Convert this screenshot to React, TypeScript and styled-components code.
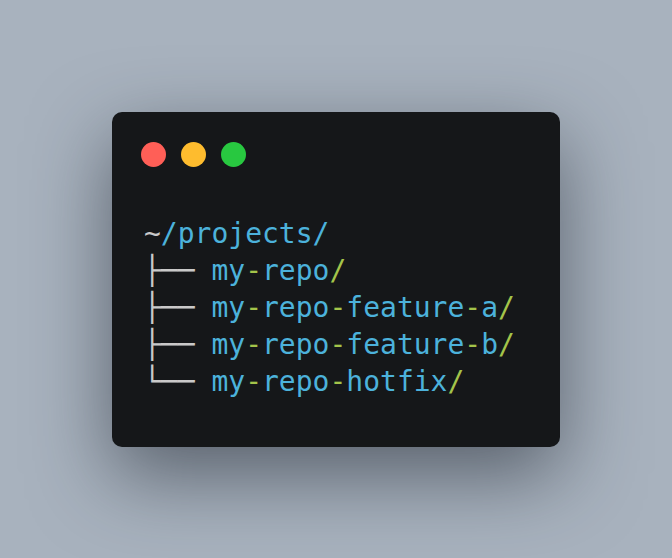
import React from "react";
import styled, { createGlobalStyle } from "styled-components";

const Global = createGlobalStyle`
  html, body { margin: 0; padding: 0; }
  body { background: #a8b2be; }
`;

const Page = styled.div`
  width: 672px;
  height: 558px;
  display: flex;
  align-items: center;
  justify-content: center;
  background: #a8b2be;
`;

const Window = styled.div`
  width: 448px;
  height: 335px;
  box-sizing: border-box;
  padding: 30px 32px 0 29px;
  background: #151719;
  border-radius: 10px;
  box-shadow: 0 28px 80px rgba(35, 42, 52, 0.6);
  display: flex;
  flex-direction: column;
`;

const Dots = styled.div`
  display: flex;
  gap: 15px;
`;

const Dot = styled.span<{ $c: string }>`
  width: 25px;
  height: 25px;
  border-radius: 50%;
  background: ${(p) => p.$c};
`;

const Tree = styled.pre`
  margin: 48px 0 0 3px;
  font-family: "DejaVu Sans Mono", monospace;
  font-size: 28px;
  line-height: 37.2px;
  color: #4cb2db;
`;

const Grey = styled.span`
  color: #c9c9c9;
`;

const Green = styled.span`
  color: #a4c44a;
`;

const Name: React.FC<{ parts: string[] }> = ({ parts }) => (
  <>
    {parts.map((p, i) => (
      <React.Fragment key={i}>
        {i > 0 && <Green>-</Green>}
        {p}
      </React.Fragment>
    ))}
    <Green>/</Green>
  </>
);

const entries: { branch: string; parts: string[] }[] = [
  { branch: "├── ", parts: ["my", "repo"] },
  { branch: "├── ", parts: ["my", "repo", "feature", "a"] },
  { branch: "├── ", parts: ["my", "repo", "feature", "b"] },
  { branch: "└── ", parts: ["my", "repo", "hotfix"] },
];

export default function App() {
  return (
    <Page>
      <Global />
      <Window>
        <Dots>
          <Dot $c="#ff5f57" />
          <Dot $c="#febc2e" />
          <Dot $c="#28c840" />
        </Dots>
        <Tree>
          <Grey>~</Grey>/projects/
          {"\n"}
          {entries.map((e, i) => (
            <React.Fragment key={i}>
              <Grey>{e.branch}</Grey>
              <Name parts={e.parts} />
              {i < entries.length - 1 ? "\n" : ""}
            </React.Fragment>
          ))}
        </Tree>
      </Window>
    </Page>
  );
}
